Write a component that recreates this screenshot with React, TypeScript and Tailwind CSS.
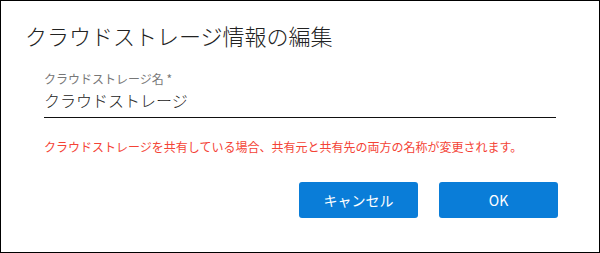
export default function App() {
  return (
    <div
      className="w-[600px] h-[253px] border border-black bg-white flex flex-col"
      style={{ fontFamily: '"Noto Sans CJK JP", "Noto Sans", sans-serif' }}
    >
      <h1 className="mt-[20px] ml-[24px] text-[22px] leading-[28px] font-light text-[#222]">
        クラウドストレージ情報の編集
      </h1>

      <div className="mx-[43px] mt-[22px] border-b border-[#111] pb-[6px]">
        <label className="block text-[12px] leading-[16px] text-[#777]">
          クラウドストレージ名 *
        </label>
        <div className="mt-[2px] text-[16px] leading-[22px] font-light text-[#222]">
          クラウドストレージ
        </div>
      </div>

      <p className="mx-[43px] mt-[21px] text-[12px] leading-[16px] text-[#f44336]">
        クラウドストレージを共有している場合、共有元と共有先の両方の名称が変更されます。
      </p>

      <div className="mt-[27px] mr-[41px] flex justify-end gap-[21px]">
        <button className="w-[119px] h-[36px] rounded-[3px] bg-[#0a7dd8] text-white text-[14px]">
          キャンセル
        </button>
        <button className="w-[119px] h-[36px] rounded-[3px] bg-[#0a7dd8] text-white text-[14px]">
          OK
        </button>
      </div>
    </div>
  );
}
